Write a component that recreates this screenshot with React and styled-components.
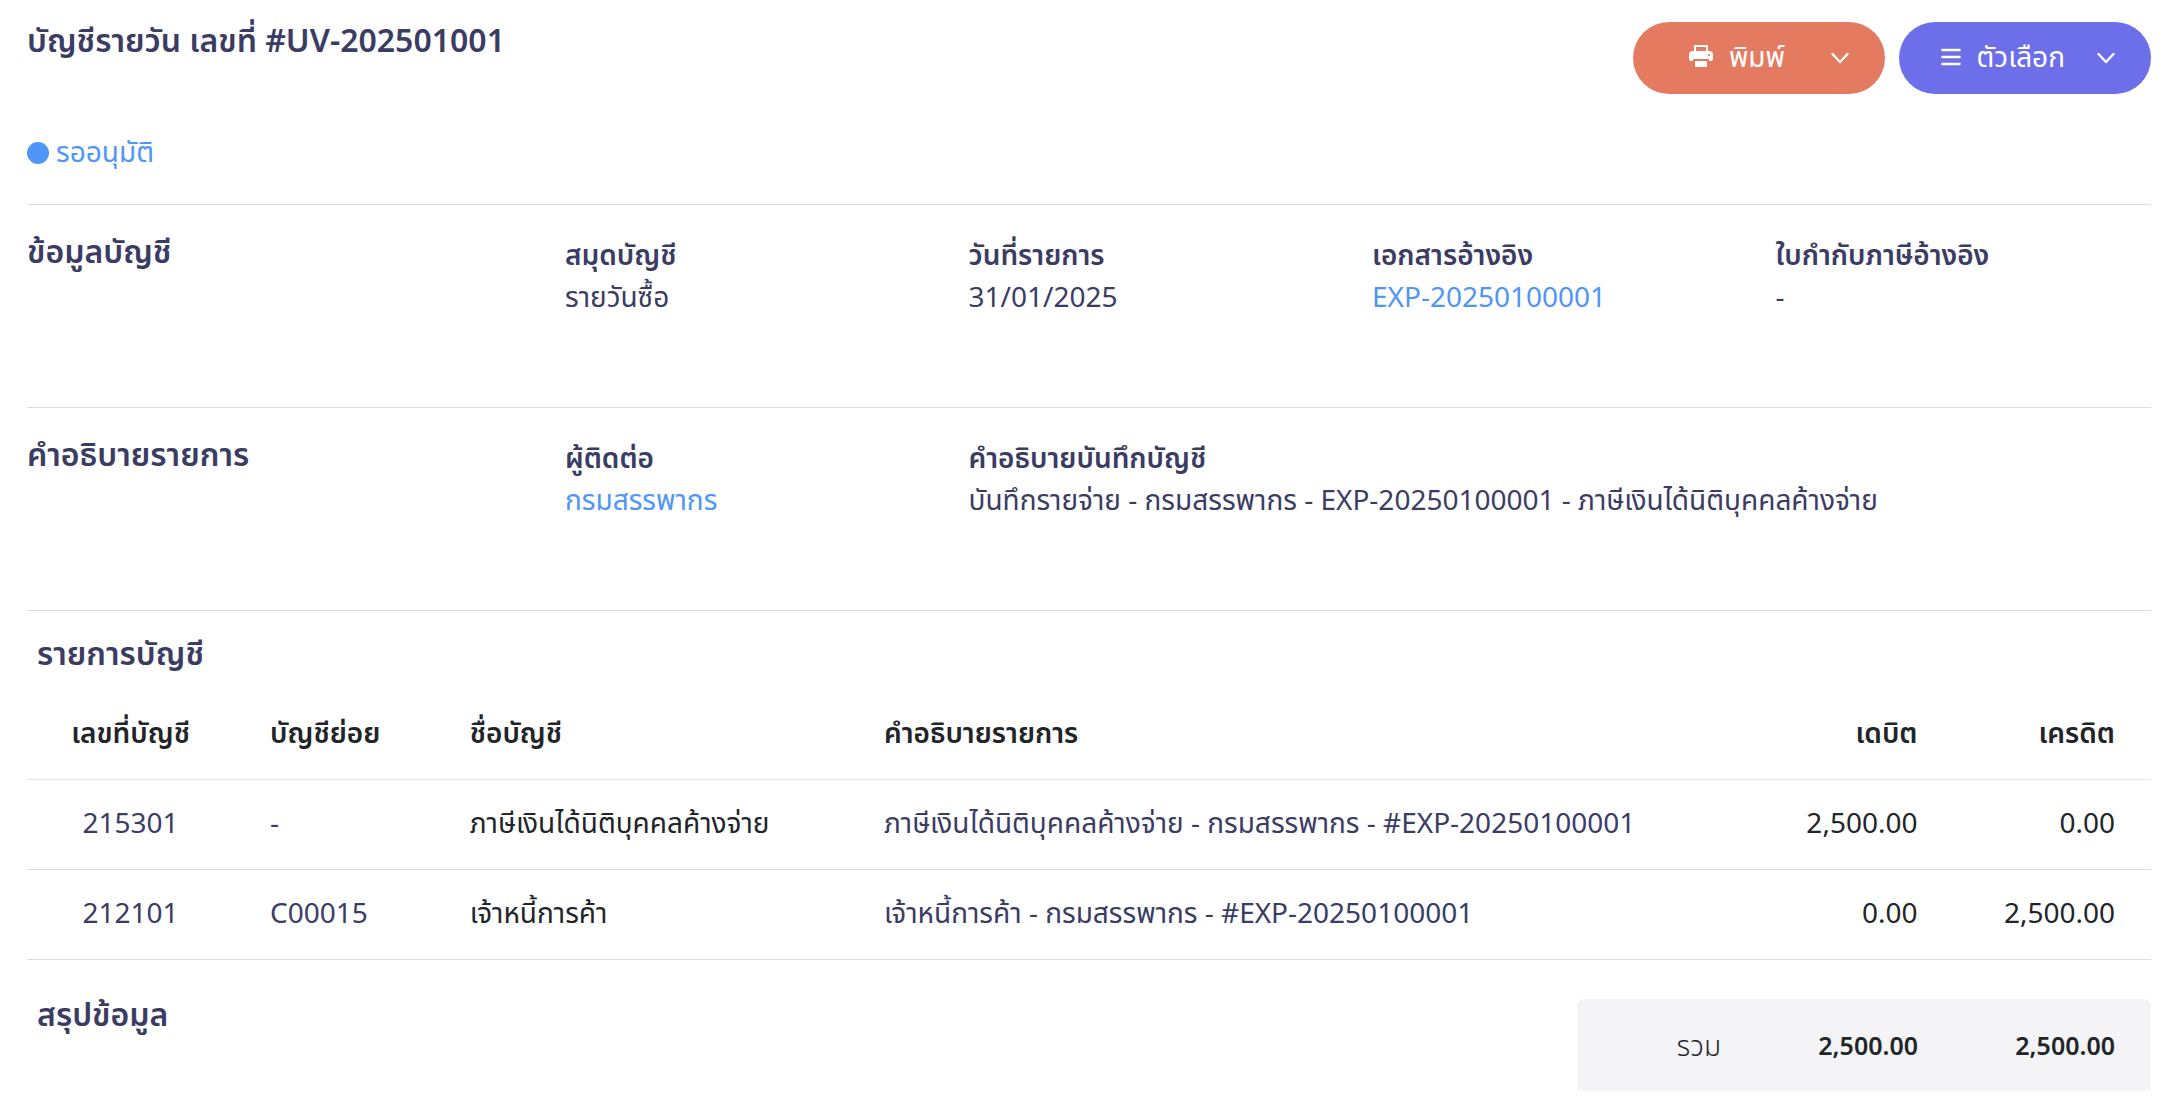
import React from "react";
import styled, { createGlobalStyle } from "styled-components";

/*
==============================================
                 Theme
*/
const colors = {
  ink: "#3b3c64",
  dark: "#212529",
  link: "#4f96f6",
  line: "#d9d9e3",
  print: "#e47b61",
  options: "#6c6eea",
  summary: "#f4f4f6"
};

const GlobalStyle = createGlobalStyle`
  * {
    box-sizing: border-box;
  }
  body {
    margin: 0;
    background: #ffffff;
    color: ${colors.ink};
    font-family: "Noto Sans", "Noto Sans Thai", sans-serif;
    font-size: 28px;
    font-weight: 400;
    line-height: 42px;
  }
`;

/*
==============================================
                 Header
*/
const Page = styled.main`
  padding: 22px 25px 27px 27px;
`;

const Header = styled.header`
  display: flex;
  justify-content: space-between;
  align-items: flex-start;
`;

const PageTitle = styled.h1`
  margin: 0;
  font-size: 32px;
  font-weight: 600;
  line-height: 36px;
`;

const Actions = styled.div`
  display: flex;
  gap: 14px;
`;

const ActionButton = styled.button`
  display: flex;
  align-items: center;
  justify-content: flex-end;
  width: 252px;
  height: 72px;
  padding: 0 36px;
  border: 0;
  border-radius: 36px;
  background: ${(props) => props.$background};
  color: #ffffff;
  font: inherit;
  cursor: pointer;
`;

const ActionLabel = styled.span`
  display: flex;
  align-items: center;
  gap: 16px;
  margin-right: ${(props) => props.$gap};
  padding-bottom: 4px;
`;

const Status = styled.p`
  display: flex;
  align-items: center;
  gap: 7px;
  margin: 36px 0 32px;
  color: ${colors.link};
`;

const StatusDot = styled.span`
  width: 22px;
  height: 22px;
  margin-top: 4px;
  border-radius: 50%;
  background: ${colors.link};
`;

/*
==============================================
                 Details
*/
const InfoSection = styled.section`
  display: grid;
  grid-template-columns: 4fr repeat(4, 3fr);
  min-height: 203px;
  margin: 0 -14px;
  position: relative;

  &::before {
    content: "";
    position: absolute;
    top: 0;
    left: 14px;
    right: 14px;
    border-top: 1px solid ${colors.line};
  }
`;

const SectionTitle = styled.h2`
  margin: 0;
  padding: ${(props) => props.$padding};
  font-size: 32px;
  font-weight: 600;
  line-height: 40px;
`;

const Field = styled.dl`
  grid-column: span ${(props) => props.$span || 1};
  margin: 0;
  padding: 29px 14px 0;
`;

const FieldName = styled.dt`
  font-weight: 600;
`;

const FieldValue = styled.dd`
  margin: 0;
`;

const Link = styled.a`
  color: ${colors.link};
  text-decoration: none;
`;

/*
==============================================
                 Entries
*/
const Entries = styled.section`
  border-top: 1px solid ${colors.line};
`;

const EntryTable = styled.table`
  width: 100%;
  table-layout: fixed;
  border-collapse: collapse;
  color: ${colors.dark};
`;

const Col = styled.col`
  width: ${(props) => props.$width};
`;

const Cell = styled.td`
  height: 90px;
  padding: 0 36px 4px;
  border-bottom: 1px solid ${colors.line};
  color: ${(props) => (props.$ink ? colors.ink : "inherit")};
  text-align: ${(props) => props.$align || "left"};
  white-space: nowrap;
`;

const HeadCell = styled(Cell)`
  border-color: #e3e3e6;
  font-weight: 600;
`;

const Summary = styled.section`
  display: flex;
  justify-content: space-between;
  align-items: flex-start;
  padding-top: 34px;
`;

const Totals = styled.dl`
  display: grid;
  grid-template-columns: 180px 197px 197px;
  align-items: center;
  height: 92px;
  margin: 5px 0 0;
  border-radius: 8px 8px 0 0;
  background: ${colors.summary};
  color: ${colors.dark};
  text-align: right;
`;

const TotalLabel = styled.dt`
  padding-right: 36px;
  font-weight: 300;
`;

const Total = styled.dd`
  margin: 0;
  padding-right: 36px;
  font-size: 25px;
  font-weight: 600;
`;

/*
==============================================
                 Icons
*/
const PrintIcon = () => (
  <svg width="24" height="24" viewBox="0 0 24 24" fill="#fff" aria-hidden="true">
    <path
      fillRule="evenodd"
      d="M5 1h14v7H5zM7 3v4h10V3z"
    />
    <path d="M4 7h16a4 4 0 0 1 4 4v4a2 2 0 0 1-2 2h-2v-2H4v2H2a2 2 0 0 1-2-2v-4a4 4 0 0 1 4-4z" />
    <path d="M6 17h12v6H6z" />
    <path d="M4 15.500h16" stroke={colors.print} />
    <circle cx="20" cy="11" r="1" fill={colors.print} />
  </svg>
);

const MenuIcon = () => (
  <svg width="20" height="22" viewBox="0 0 20 22" aria-hidden="true">
    <path
      d="M1.500 5h17M1.500 12h17M1.500 19h17"
      stroke="#fff"
      strokeWidth="2.600"
      strokeLinecap="round"
    />
  </svg>
);

const ChevronIcon = () => (
  <svg width="18" height="12" viewBox="0 0 18 12" fill="none" aria-hidden="true">
    <path
      d="M1.500 2l7.500 8 7.500-8"
      stroke="#fff"
      strokeWidth="2.400"
      strokeLinecap="round"
      strokeLinejoin="round"
    />
  </svg>
);

const entries = [
  {
    account: "215301",
    sub: "-",
    name: "ภาษีเงินได้นิติบุคคลค้างจ่าย",
    description: "ภาษีเงินได้นิติบุคคลค้างจ่าย - กรมสรรพากร - #EXP-20250100001",
    debit: "2,500.00",
    credit: "0.00"
  },
  {
    account: "212101",
    sub: "C00015",
    name: "เจ้าหนี้การค้า",
    description: "เจ้าหนี้การค้า - กรมสรรพากร - #EXP-20250100001",
    debit: "0.00",
    credit: "2,500.00"
  }
];

const App = () => (
  <React.Fragment>
    <GlobalStyle />
    <Page lang="th">
      <Header>
        <PageTitle>บัญชีรายวัน เลขที่ #UV-202501001</PageTitle>
        <Actions>
          <ActionButton type="button" $background={colors.print}>
            <ActionLabel $gap="46px">
              <PrintIcon />
              พิมพ์
            </ActionLabel>
            <ChevronIcon />
          </ActionButton>
          <ActionButton type="button" $background={colors.options}>
            <ActionLabel $gap="32px">
              <MenuIcon />
              ตัวเลือก
            </ActionLabel>
            <ChevronIcon />
          </ActionButton>
        </Actions>
      </Header>
      <Status>
        <StatusDot />
        รออนุมัติ
      </Status>

      <InfoSection>
        <SectionTitle $padding="27px 14px 0">ข้อมูลบัญชี</SectionTitle>
        <Field>
          <FieldName>สมุดบัญชี</FieldName>
          <FieldValue>รายวันซื้อ</FieldValue>
        </Field>
        <Field>
          <FieldName>วันที่รายการ</FieldName>
          <FieldValue>31/01/2025</FieldValue>
        </Field>
        <Field>
          <FieldName>เอกสารอ้างอิง</FieldName>
          <FieldValue>
            <Link href="#expense">EXP-20250100001</Link>
          </FieldValue>
        </Field>
        <Field>
          <FieldName>ใบกำกับภาษีอ้างอิง</FieldName>
          <FieldValue>-</FieldValue>
        </Field>
      </InfoSection>

      <InfoSection>
        <SectionTitle $padding="27px 14px 0">คำอธิบายรายการ</SectionTitle>
        <Field>
          <FieldName>ผู้ติดต่อ</FieldName>
          <FieldValue>
            <Link href="#contact">กรมสรรพากร</Link>
          </FieldValue>
        </Field>
        <Field $span={3}>
          <FieldName>คำอธิบายบันทึกบัญชี</FieldName>
          <FieldValue>
            บันทึกรายจ่าย - กรมสรรพากร - EXP-20250100001 -
            ภาษีเงินได้นิติบุคคลค้างจ่าย
          </FieldValue>
        </Field>
      </InfoSection>

      <Entries>
        <SectionTitle $padding="22px 10px 16px">รายการบัญชี</SectionTitle>
        <EntryTable>
          <colgroup>
            <Col $width="9.75%" />
            <Col $width="9.4%" />
            <Col $width="19.5%" />
            <Col />
            <Col $width="9.3%" />
            <Col $width="9.3%" />
          </colgroup>
          <thead>
            <tr>
              <HeadCell as="th" $align="center">เลขที่บัญชี</HeadCell>
              <HeadCell as="th">บัญชีย่อย</HeadCell>
              <HeadCell as="th">ชื่อบัญชี</HeadCell>
              <HeadCell as="th">คำอธิบายรายการ</HeadCell>
              <HeadCell as="th" $align="right">เดบิต</HeadCell>
              <HeadCell as="th" $align="right">เครดิต</HeadCell>
            </tr>
          </thead>
          <tbody>
            {entries.map((entry) => (
              <tr key={entry.account}>
                <Cell $ink $align="center">{entry.account}</Cell>
                <Cell $ink>{entry.sub}</Cell>
                <Cell>{entry.name}</Cell>
                <Cell $ink>{entry.description}</Cell>
                <Cell $align="right">{entry.debit}</Cell>
                <Cell $align="right">{entry.credit}</Cell>
              </tr>
            ))}
          </tbody>
        </EntryTable>
      </Entries>

      <Summary>
        <SectionTitle $padding="0 10px">สรุปข้อมูล</SectionTitle>
        <Totals>
          <TotalLabel>รวม</TotalLabel>
          <Total>2,500.00</Total>
          <Total>2,500.00</Total>
        </Totals>
      </Summary>
    </Page>
  </React.Fragment>
);

export default App;
